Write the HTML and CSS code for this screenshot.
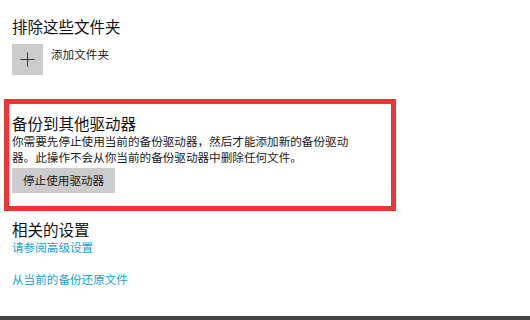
FILE: index.html
```html
<!DOCTYPE html>
<html lang="zh-CN">
<head>
<meta charset="utf-8">
<link rel="stylesheet" href="styles.css">
</head>
<body>
<div class="page">
  <main class="content">
    <h2 class="heading first">排除这些文件夹</h2>
    <div class="add-row">
      <div class="add-box">
        <svg width="15" height="15" viewBox="0 0 15 15"><path d="M7.5 0.5V14.5M0.5 7.5H14.5" stroke="#3a3a3a" stroke-width="1" fill="none"/></svg>
      </div>
      <span class="add-label">添加文件夹</span>
    </div>

    <section class="highlight">
      <h2 class="heading">备份到其他驱动器</h2>
      <p class="desc">你需要先停止使用当前的备份驱动器，然后才能添加新的备份驱动器。此操作不会从你当前的备份驱动器中删除任何文件。</p>
      <button class="btn">停止使用驱动器</button>
    </section>

    <h2 class="heading related">相关的设置</h2>
    <a class="link" href="#">请参阅高级设置</a>
    <a class="link second" href="#">从当前的备份还原文件</a>
  </main>
  <div class="bottom-bar"></div>
</div>
</body>
</html>
```
FILE: styles.css
```css
* { box-sizing: border-box; }
html, body { margin: 0; padding: 0; background: #fff; }
body {
  font-family: "Noto Sans CJK SC", "Noto Sans", sans-serif;
  color: #000;
}
.page {
  display: flex;
  flex-direction: column;
  height: 320px;
}
.content {
  flex: 1;
  padding-left: 12px;
}
.heading {
  margin: 0;
  font-size: 15.5px;
  line-height: 20px;
  font-weight: 400;
  color: #111;
}
.heading.first { margin-top: 16px; }
.add-row {
  display: flex;
  align-items: flex-start;
  margin-top: 8px;
}
.add-box {
  width: 31px;
  height: 31px;
  background: #cccccc;
  display: flex;
  align-items: center;
  justify-content: center;
}
.add-label {
  margin-left: 8px;
  padding-top: 2px;
  font-size: 11.6px;
  line-height: 16px;
  color: #222;
}
.highlight {
  margin: 24px 0 0 -8px;
  width: 392px;
  border: 5px solid #ee3535;
  padding: 9px 0 13px 3px;
}
.desc {
  margin: 0;
  width: 345px;
  font-size: 11.6px;
  line-height: 16px;
  color: #1a1a1a;
}
.btn {
  margin-top: 3px;
  display: block;
  height: 25px;
  padding: 0 11px;
  border: none;
  background: #cccccc;
  font-family: inherit;
  font-size: 11.6px;
  line-height: 25px;
  color: #1a1a1a;
}
.heading.related { margin-top: 8px; }
.link {
  display: block;
  font-size: 11.6px;
  line-height: 16px;
  color: #1a9fd6;
  text-decoration: none;
}
.link.second { margin-top: 16px; }
.bottom-bar {
  height: 4px;
  background: #444444;
}
```
